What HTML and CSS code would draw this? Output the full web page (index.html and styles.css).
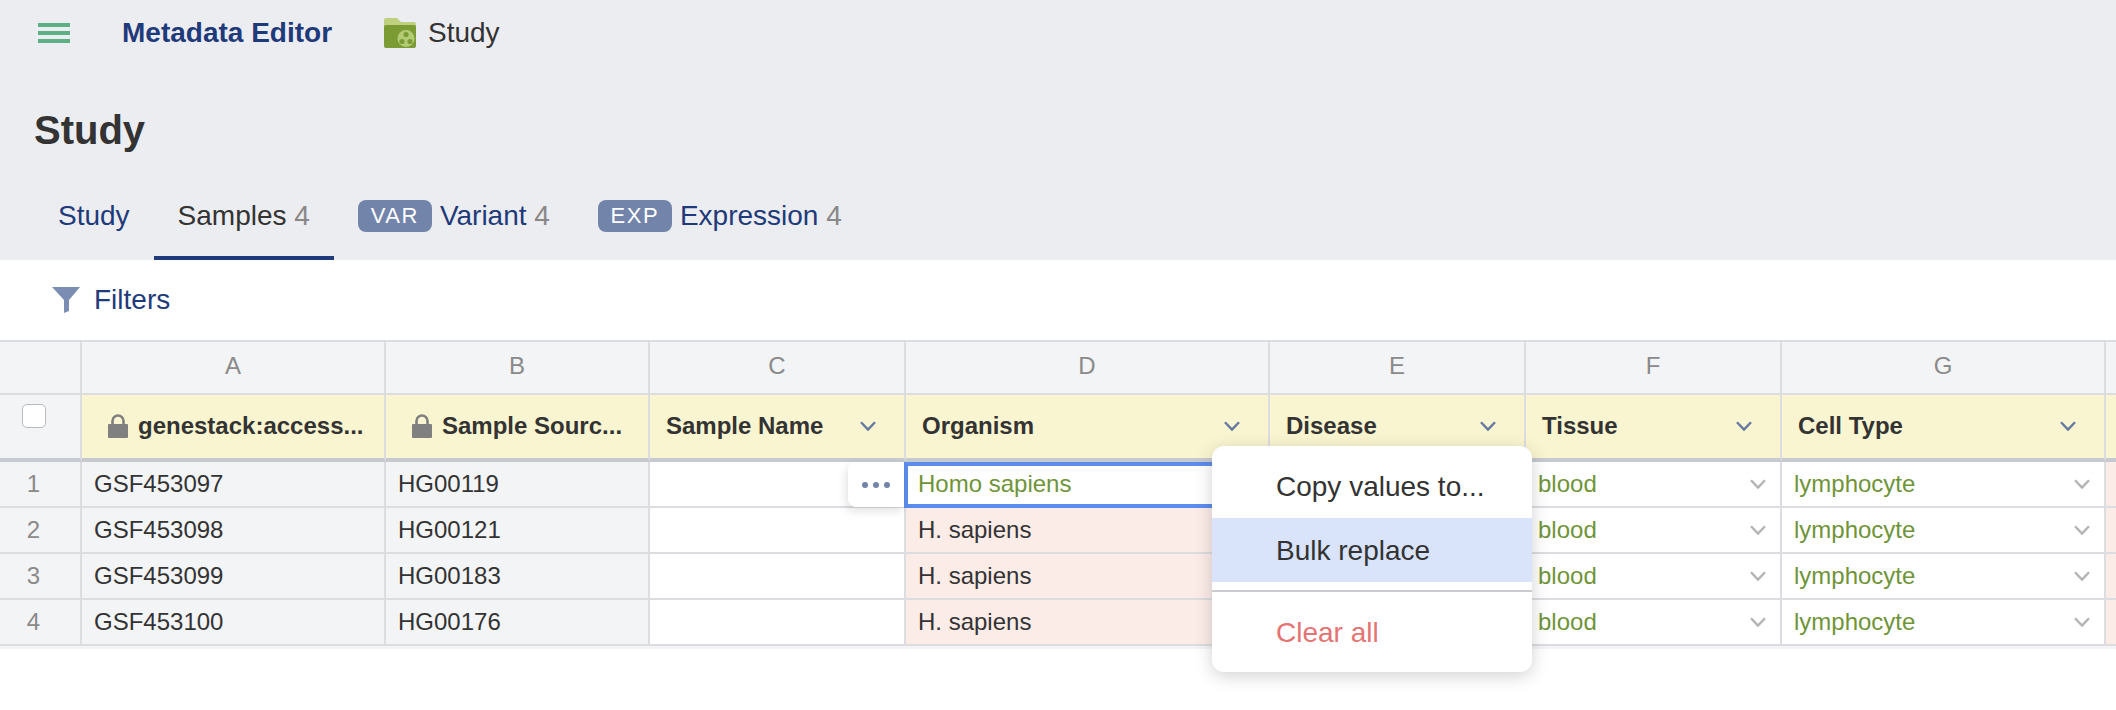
FILE: index.html
```html
<!DOCTYPE html>
<html lang="en">
<head>
<meta charset="utf-8">
<title>Metadata Editor</title>
<link rel="stylesheet" href="styles.css">
</head>
<body>
<svg class="defs" width="0" height="0" aria-hidden="true">
  <symbol id="chev" viewBox="0 0 16 10"><path d="M1 1.2 8 8.6 15 1.2" fill="none" stroke="currentColor" stroke-width="2.4"/></symbol>
  <symbol id="lock" viewBox="0 0 20 24"><path d="M4.5 11V7a5.5 5.5 0 0 1 11 0v4" fill="none" stroke="currentColor" stroke-width="2.6"/><rect x="0" y="10" width="20" height="14" rx="1" fill="currentColor"/></symbol>
</svg>
<header class="head">
  <div class="topbar">
    <div class="burger"><span></span><span></span><span></span></div>
    <div class="brand">Metadata Editor</div>
    <svg class="folder" viewBox="0 0 32 30" width="32" height="30">
      <path d="M2 0h11l4 4h13a2 2 0 0 1 2 2v8H0V2a2 2 0 0 1 2-2z" fill="#bdd17e"/>
      <path d="M2 7h28a2 2 0 0 1 2 2v19a2 2 0 0 1-2 2H2a2 2 0 0 1-2-2V9a2 2 0 0 1 2-2z" fill="#7b9c35"/>
      <circle cx="22" cy="20.5" r="8.5" fill="#b3cb72"/>
      <circle cx="22" cy="16.5" r="2.6" fill="#7b9c35"/>
      <circle cx="18" cy="23.5" r="2.6" fill="#7b9c35"/>
      <circle cx="26" cy="23.5" r="2.6" fill="#7b9c35"/>
    </svg>
    <div class="crumb">Study</div>
  </div>
  <h1 class="title">Study</h1>
  <nav class="tabs">
    <a class="tab">Study</a>
    <a class="tab active">Samples <span class="count">4</span></a>
    <a class="tab"><span class="badge">VAR</span>Variant <span class="count">4</span></a>
    <a class="tab"><span class="badge">EXP</span>Expression <span class="count">4</span></a>
  </nav>
</header>
<div class="filters">
  <svg class="funnel" viewBox="0 0 28 26" width="28" height="26"><path d="M0 0h28L17 13v11l-5 2V13z" fill="#7c8db3"/></svg>
  <span>Filters</span>
</div>
<main class="sheet">
  <div class="grid">
    <div class="c letter corner"></div>
    <div class="c letter">A</div>
    <div class="c letter">B</div>
    <div class="c letter">C</div>
    <div class="c letter">D</div>
    <div class="c letter">E</div>
    <div class="c letter">F</div>
    <div class="c letter">G</div>
    <div class="c letter"></div>

    <div class="c hcorner"><span class="check"></span></div>
    <div class="c h locked"><svg class="lock"><use href="#lock"/></svg><span class="hname">genestack:access...</span></div>
    <div class="c h locked"><svg class="lock"><use href="#lock"/></svg><span class="hname">Sample Sourc...</span></div>
    <div class="c h"><span class="hname">Sample Name</span><svg class="hchev"><use href="#chev"/></svg></div>
    <div class="c h"><span class="hname">Organism</span><svg class="hchev"><use href="#chev"/></svg></div>
    <div class="c h"><span class="hname">Disease</span><svg class="hchev"><use href="#chev"/></svg></div>
    <div class="c h"><span class="hname">Tissue</span><svg class="hchev"><use href="#chev"/></svg></div>
    <div class="c h"><span class="hname">Cell Type</span><svg class="hchev"><use href="#chev"/></svg></div>
    <div class="c h"></div>

    <div class="c num">1</div>
    <div class="c ro">GSF453097</div>
    <div class="c ro">HG00119</div>
    <div class="c"></div>
    <div class="c sel">Homo sapiens</div>
    <div class="c"></div>
    <div class="c ok">blood<svg class="cchev"><use href="#chev"/></svg></div>
    <div class="c ok">lymphocyte<svg class="cchev"><use href="#chev"/></svg></div>
    <div class="c bad"></div>

    <div class="c num">2</div>
    <div class="c ro">GSF453098</div>
    <div class="c ro">HG00121</div>
    <div class="c"></div>
    <div class="c bad">H. sapiens</div>
    <div class="c"></div>
    <div class="c ok">blood<svg class="cchev"><use href="#chev"/></svg></div>
    <div class="c ok">lymphocyte<svg class="cchev"><use href="#chev"/></svg></div>
    <div class="c bad"></div>

    <div class="c num">3</div>
    <div class="c ro">GSF453099</div>
    <div class="c ro">HG00183</div>
    <div class="c"></div>
    <div class="c bad">H. sapiens</div>
    <div class="c"></div>
    <div class="c ok">blood<svg class="cchev"><use href="#chev"/></svg></div>
    <div class="c ok">lymphocyte<svg class="cchev"><use href="#chev"/></svg></div>
    <div class="c bad"></div>

    <div class="c num">4</div>
    <div class="c ro">GSF453100</div>
    <div class="c ro">HG00176</div>
    <div class="c"></div>
    <div class="c bad">H. sapiens</div>
    <div class="c"></div>
    <div class="c ok">blood<svg class="cchev"><use href="#chev"/></svg></div>
    <div class="c ok">lymphocyte<svg class="cchev"><use href="#chev"/></svg></div>
    <div class="c bad"></div>
  </div>
  <div class="more"><i></i><i></i><i></i></div>
  <div class="menu">
    <div class="item">Copy values to...</div>
    <div class="item hover">Bulk replace</div>
    <div class="sep"></div>
    <div class="item danger">Clear all</div>
  </div>
</main>
</body>
</html>
```
FILE: styles.css
```css
* { box-sizing: border-box; }
html, body { margin: 0; padding: 0; }
body {
  width: 2116px;
  height: 710px;
  overflow: hidden;
  background: #fff;
  color: #333;
  font-family: "Liberation Sans", Arial, sans-serif;
}
.defs { position: absolute; }

.head { background: #ecedf0; height: 260px; display: flex; flex-direction: column; }
.topbar { display: flex; align-items: center; height: 66px; padding-left: 38px; }
.burger { width: 32px; display: flex; flex-direction: column; gap: 4px; }
.burger span { display: block; height: 4px; background: #5cb085; }
.brand { margin-left: 52px; font-size: 28px; font-weight: 700; color: #1f3a7a; width: 209px; white-space: nowrap; }
.folder { margin-left: 53px; display: block; }
.crumb { margin-left: 12px; font-size: 28px; color: #333; }
.title { margin: 40px 0 0 34px; font-size: 40px; line-height: 48px; font-weight: 700; color: #333; }
.tabs { display: flex; margin: 31px 0 0 34px; height: 75px; }
.tab {
  display: flex; align-items: center; height: 75px;
  padding: 0 24px 9px; font-size: 28px; color: #1f3a7a;
  white-space: pre; border-bottom: 4px solid transparent;
}
.tab.active { color: #333; border-bottom-color: #1f3a7a; }
.count { color: #888; }
.badge {
  display: flex; align-items: center; justify-content: center;
  width: 74px; height: 32px; margin-right: 8px;
  border-radius: 8px; background: #7284aa; color: #fff;
  font-size: 22px; letter-spacing: 1.6px;
}

.filters { display: flex; align-items: center; height: 80px; padding-left: 52px; gap: 14px; font-size: 28px; color: #1f3a7a; }
.funnel { display: block; }

.sheet { position: relative; }
.grid {
  display: grid;
  grid-template-columns: 82px 304px 264px 256px 364px 256px 256px 324px 10px;
  grid-template-rows: 53px 67px 46px 46px 46px 46px;
  border-top: 2px solid #dcdde0;
  box-shadow: 0 3px 0 #f4f4f6;
  font-size: 24px;
}
.c {
  display: flex; align-items: center; position: relative; min-width: 0;
  padding-left: 12px;
  border-right: 2px solid #dcdde0;
  border-bottom: 2px solid #dcdde0;
  background: #fff;
  white-space: nowrap;
}
.c:nth-child(9n) { border-right: 0; }
.letter { justify-content: center; padding: 0 0 4px; background: #f3f4f6; color: #8a8a8a; }
.hcorner { background: #f3f4f6; padding: 9px 0 0 22px; align-items: flex-start; border-bottom: 4px solid #c7c9d1; }
.check { width: 24px; height: 24px; border: 1.5px solid #b9bbc0; border-radius: 5px; background: #fff; }
.h {
  background: #f9f5d0; font-weight: 700; color: #333; padding: 0 28px 2px 16px;
  justify-content: space-between; border-bottom: 4px solid #c7c9d1;
}
.h.locked { justify-content: flex-start; padding-left: 26px; }
.lock { width: 20px; height: 24px; color: #808080; margin-right: 10px; flex: none; }
.hchev { width: 16px; height: 10px; color: #66799f; flex: none; }
.num { justify-content: center; padding: 0 13px 0 0; background: #f3f4f6; color: #8a8a8a; }
.ro { background: #f3f4f6; color: #333; }
.ok { color: #6f9438; justify-content: space-between; padding-right: 14px; }
.bad { background: #fbece8; color: #333; }
.cchev { width: 16px; height: 10px; color: #b4b4b4; flex: none; }
.sel { color: #6f9438; border: 4px solid #5c8cec; padding: 0 0 2px 10px; margin-left: -2px; }

.more {
  position: absolute; left: 848px; top: 122px; width: 56px; height: 45px;
  display: flex; align-items: center; justify-content: center; gap: 5px;
  background: #fff; border-radius: 8px 0 0 8px;
  box-shadow: -2px 4px 10px rgba(0,0,0,.12);
}
.more i { width: 6px; height: 6px; border-radius: 50%; background: #7284aa; }
.menu {
  position: absolute; left: 1212px; top: 106px; width: 320px; padding: 8px 0;
  background: #fff; border-radius: 12px;
  box-shadow: 0 4px 18px rgba(0,0,0,.18);
}
.item { height: 64px; display: flex; align-items: center; padding: 2px 0 0 64px; font-size: 28px; color: #333; }
.item.hover { background: #d9e4fb; }
.item.danger { color: #e57373; }
.sep { height: 2px; margin: 8px 0; background: #c9cbd0; }
```
